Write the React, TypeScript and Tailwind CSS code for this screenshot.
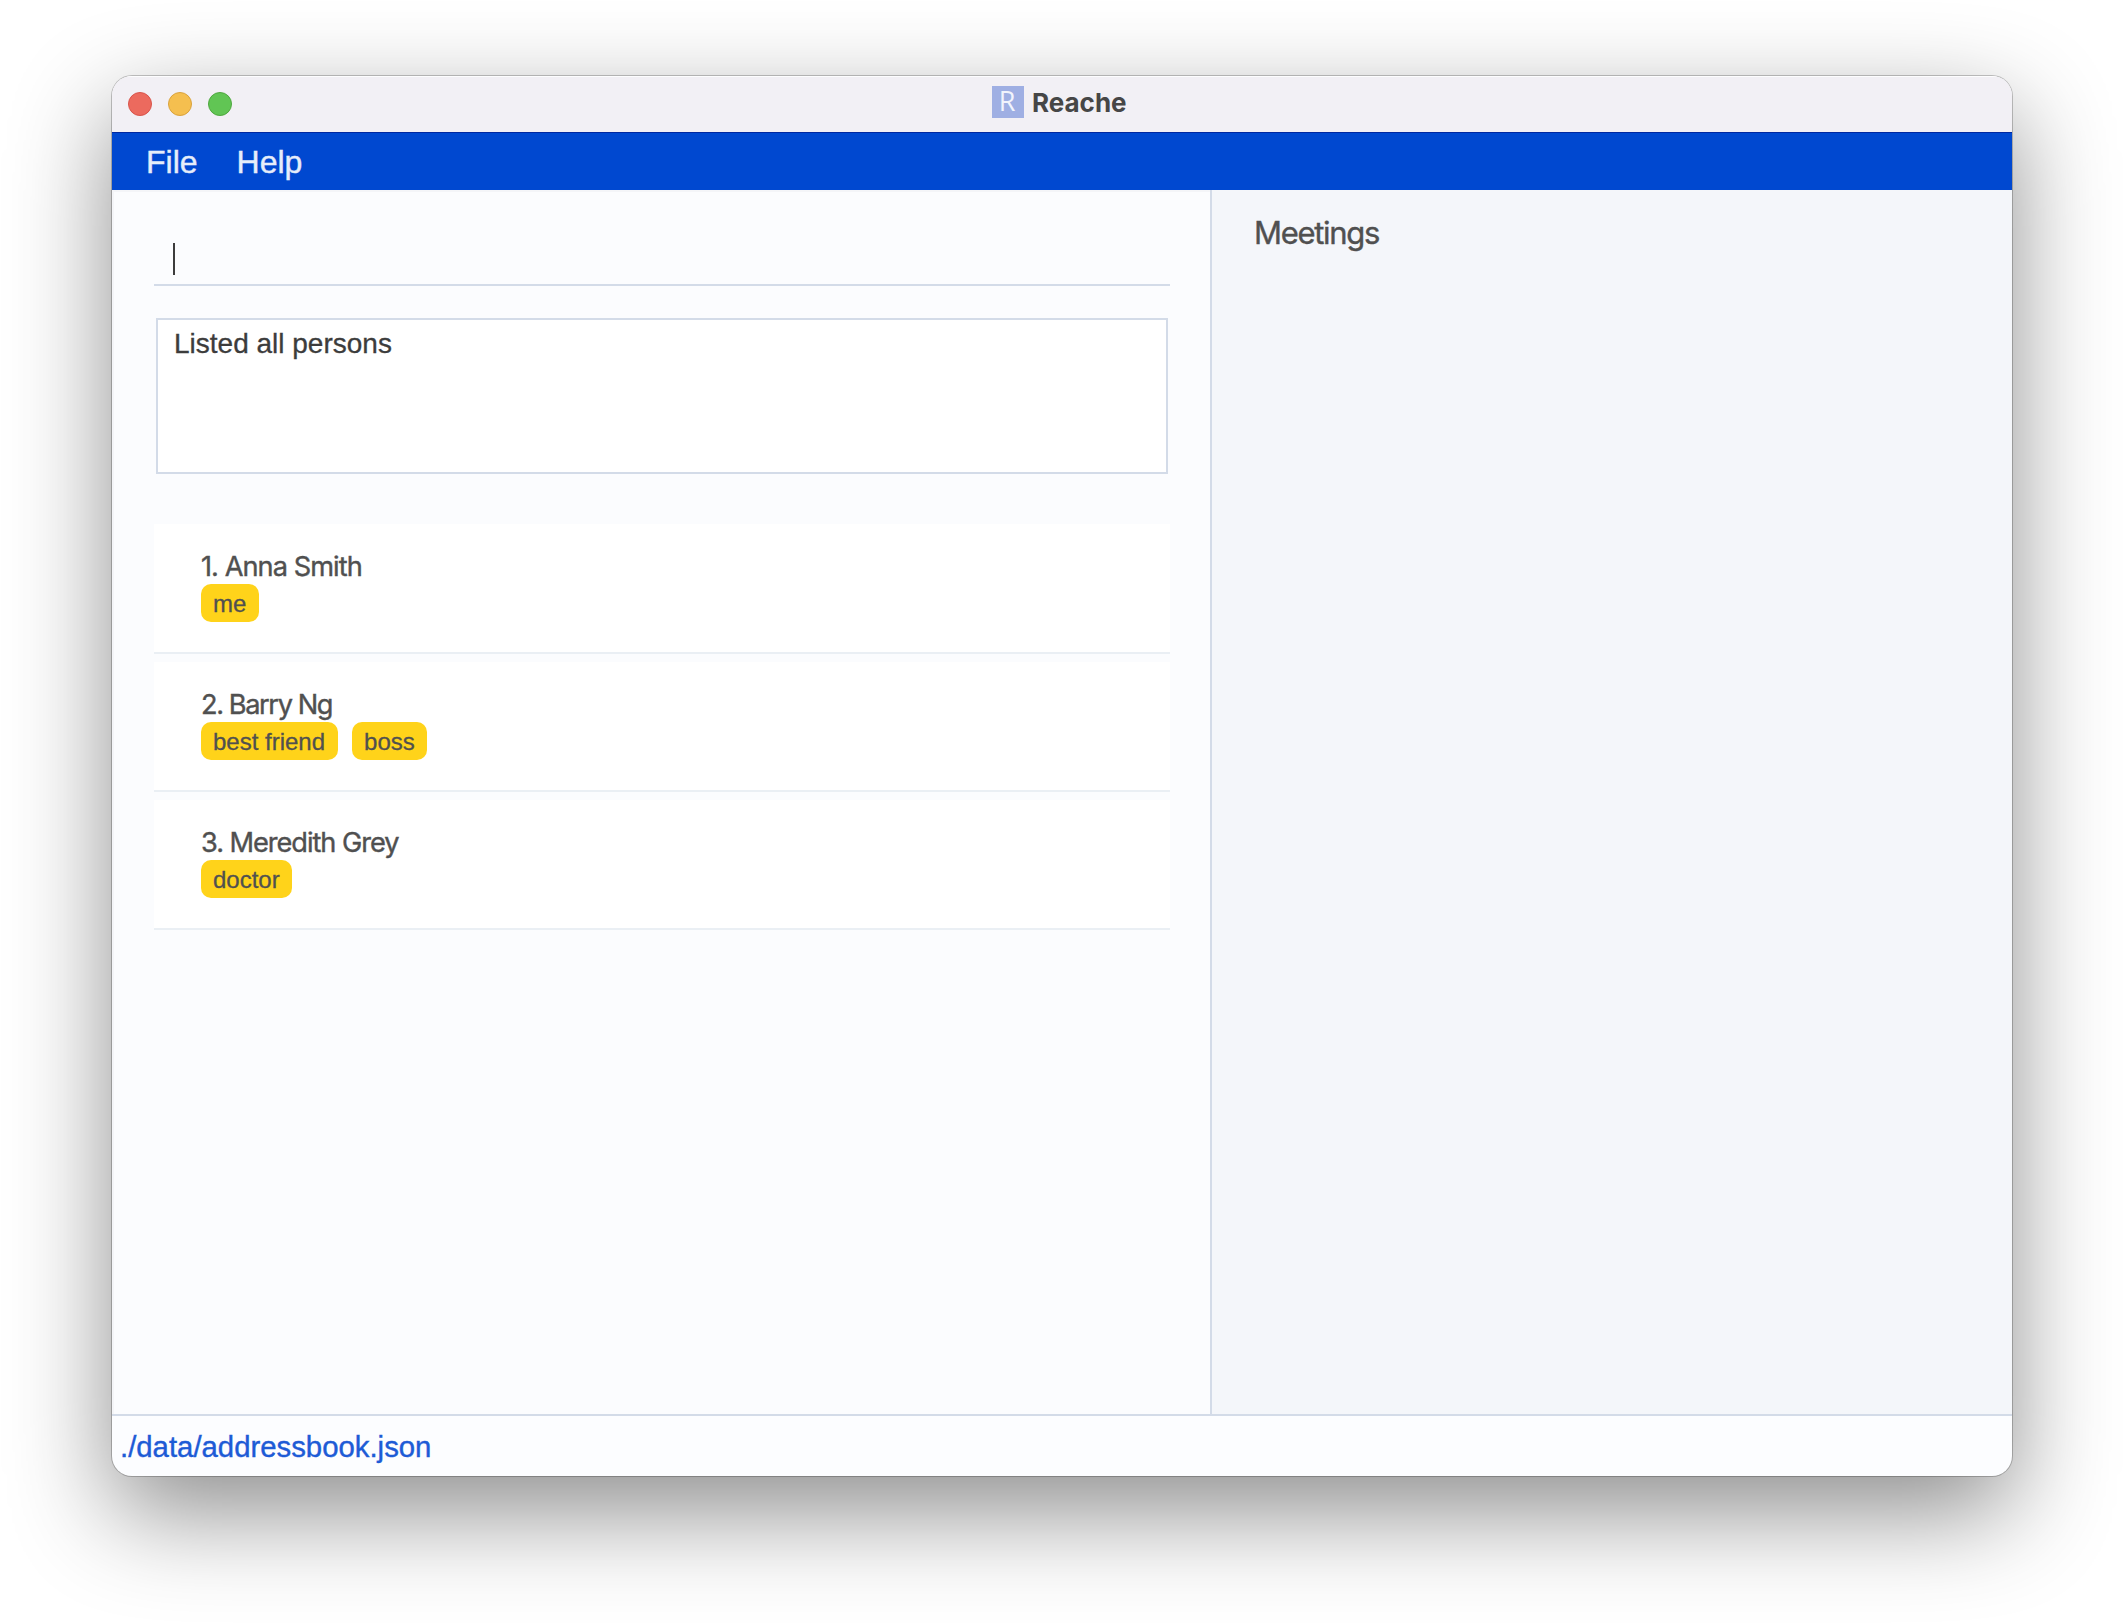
import React from "react";

const people = [
  { name: "1. Anna Smith", spacing: "tracking-[-0.95px]", tags: [{ label: "me", pad: "pr-[13px]" }] },
  {
    name: "2. Barry Ng",
    spacing: "tracking-[-1.4px]",
    tags: [
      { label: "best friend", pad: "pr-[13px]" },
      { label: "boss", pad: "pr-3" },
    ],
  },
  { name: "3. Meredith Grey", spacing: "tracking-[-1.05px]", tags: [{ label: "doctor", pad: "pr-3" }] },
];

function TitleBar() {
  return (
    <header className="relative flex h-14 shrink-0 items-center bg-[#f2f0f5] pl-4 shadow-[inset_0_1px_0_#fdfdfe]">
      <div className="flex gap-4">
        <span className="size-6 rounded-full border border-[#d8544b] bg-[#ec6a5e]" />
        <span className="size-6 rounded-full border border-[#d9a23d] bg-[#f5bf4f]" />
        <span className="size-6 rounded-full border border-[#4fa73f] bg-[#61c554]" />
      </div>
      <div className="absolute left-[880px] top-[10px] flex items-start">
        <span className="flex size-8 items-center justify-center bg-[#9fafe3] pr-[2px] font-['Open_Sans'] text-[27px] leading-[30px] text-[#f2f4fc]">
          <span className="-mt-0.5">R</span>
        </span>
        <span className="ml-2 mt-px font-[Inter] text-[26px] font-bold leading-8 text-[#464646]">
          Reache
        </span>
      </div>
    </header>
  );
}

function MenuBar() {
  return (
    <nav className="flex h-[58px] shrink-0 items-center gap-[39px] border-t border-[#0028a0] bg-[#0048d0] pl-[34px] text-[32px] leading-none text-[#e6edfa] [-webkit-text-stroke:0.4px]">
      <span>File</span>
      <span>Help</span>
    </nav>
  );
}

export default function App() {
  return (
    <div className="h-[1624px] w-[2124px] overflow-hidden bg-white pl-28 pt-[76px] font-['Liberation_Sans',sans-serif]">
      <div className="flex h-[1400px] w-[1900px] flex-col overflow-hidden rounded-[20px] bg-[#fcfdff] shadow-[0_0_0_1px_rgba(0,0,0,0.22),0_36px_100px_rgba(0,0,0,0.45)]">
        <TitleBar />
        <MenuBar />
        <div className="flex min-h-0 flex-1">
          <main className="w-[1098px] bg-[#fbfcfe] pl-[42px] pr-10 pt-[53px] shadow-[inset_2px_2px_0_#f4f5f8]">
            <div className="flex h-[43px] border-b-2 border-[#d3dbe8] pl-[19px]">
              <span className="h-8 w-0.5 bg-[#3c3c3c]" />
            </div>
            <div className="mx-0.5 mt-8 h-[156px] border-2 border-[#d3dbe8] bg-white pl-4 pt-2 text-[28px] leading-8 text-[#3c3c3c] [-webkit-text-stroke:0.3px]">
              Listed all persons
            </div>
            <ul className="mt-[50px] flex flex-col gap-2">
              {people.map((p) => (
                <li key={p.name} className="h-[130px] border-b-2 border-[#eaeff4] bg-white pl-[47px] pt-[25px]">
                  <div className={`h-[35px] whitespace-nowrap font-[Inter] text-[27.2px] leading-[35px] text-[#505050] [-webkit-text-stroke:0.4px] ${p.spacing}`}>
                    {p.name}
                  </div>
                  <div className="flex gap-[14px]">
                    {p.tags.map((t) => (
                      <span key={t.label} className={`h-[38px] rounded-[10px] bg-[#ffd31a] pl-3 text-[24px] leading-[40px] text-[#505050] [-webkit-text-stroke:0.3px] ${t.pad}`}>
                        {t.label}
                      </span>
                    ))}
                  </div>
                </li>
              ))}
            </ul>
          </main>
          <aside className="flex-1 border-l-2 border-[#d3dbe8] bg-[#f4f6fa] pl-[42px] pt-6">
            <h2 className="font-[Inter] text-[31px] leading-[38px] tracking-[-1.3px] text-[#505050] [-webkit-text-stroke:0.4px]">Meetings</h2>
          </aside>
        </div>
        <footer className="flex h-[62px] shrink-0 items-center border-t-2 border-[#d3dbe8] pl-2 pt-0.5 text-[29.33px] leading-none text-[#1d5bd6] [-webkit-text-stroke:0.4px]">
          ./data/addressbook.json
        </footer>
      </div>
    </div>
  );
}
